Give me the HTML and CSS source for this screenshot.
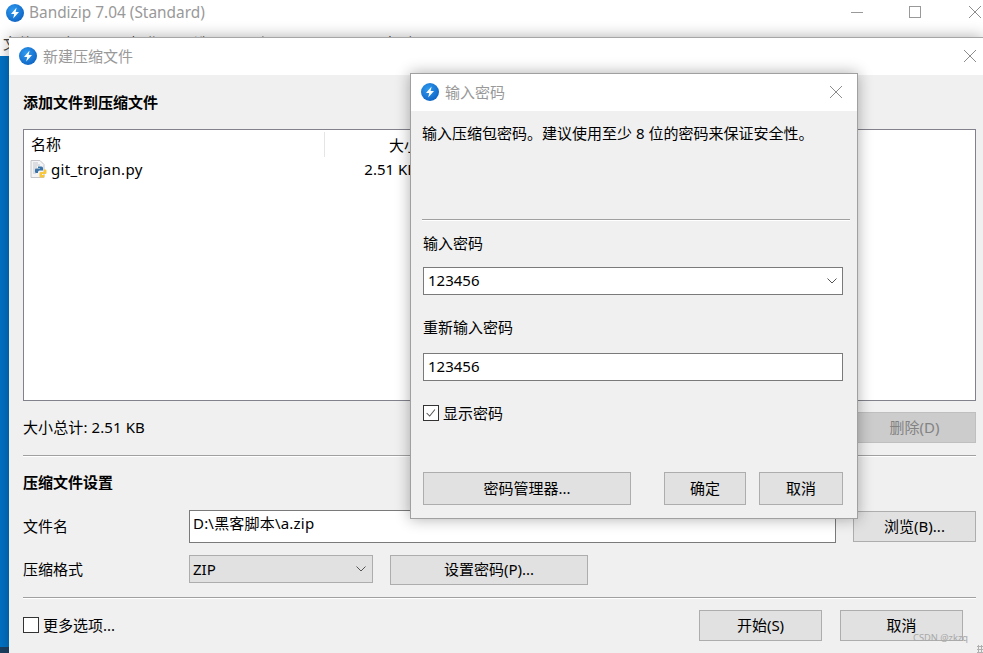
FILE: index.html
```html
<!DOCTYPE html>
<html lang="zh-CN">
<head>
    <meta charset="UTF-8" />
    <title>Bandizip 7.04 (Standard)</title>
    <link rel="stylesheet" href="styles.css">
</head>
<body>
<svg class="defs" width="0" height="0" aria-hidden="true">
    <defs>
        <radialGradient id="logo-fill" cx="40%" cy="35%" r="75%">
            <stop offset="0" stop-color="#2f9bf0"/>
            <stop offset="1" stop-color="#0b5fc0"/>
        </radialGradient>
        <symbol id="logo" viewBox="0 0 18 18">
            <circle cx="9" cy="9" r="9" fill="url(#logo-fill)"/>
            <path d="M10.6 3.6 5 10h3.2l-1 4.6L13 8H9.6z" fill="#fff"/>
        </symbol>
        <symbol id="close" viewBox="0 0 14 14">
            <path d="M1 1l12 12M13 1 1 13" stroke="#8c8c8c" stroke-width="1" fill="none"/>
        </symbol>
        <symbol id="chevron" viewBox="0 0 10 6">
            <path d="M.5.5 5 5 9.5.5" stroke="#555" stroke-width="1" fill="none"/>
        </symbol>
    </defs>
</svg>

<div class="desktop">
    <div class="app-window">
        <div class="app-title">
            <svg class="logo"><use href="#logo"/></svg>
            <span class="app-name">Bandizip 7.04 (Standard)</span>
        </div>
        <div class="win-controls">
            <span class="win-min"></span>
            <span class="win-max"></span>
            <svg class="win-close"><use href="#close"/></svg>
        </div>
        <div class="app-menu">
            <span>文件(F)</span><span>打开(O)</span><span>操作(A)</span><span>选项(O)</span><span>视图(V)</span><span>工具(T)</span><span>帮助(H)</span>
        </div>
        <div class="app-side"></div>
    </div>

    <div class="dialog main-dialog">
        <div class="titlebar">
            <svg class="logo"><use href="#logo"/></svg>
            <span class="titlebar-text">新建压缩文件</span>
            <svg class="close-icon"><use href="#close"/></svg>
        </div>
        <div class="main-body">
            <h2 class="section-title first">添加文件到压缩文件</h2>
            <div class="file-list">
                <div class="list-head">
                    <span class="col-name">名称</span>
                    <span class="col-size">大小</span>
                </div>
                <div class="list-row">
                    <span class="col-name file-name">
                        <svg class="py-icon" viewBox="0 0 18 18">
                            <path d="M1 .5h9l4 4v13H1z" fill="#f4f4f6" stroke="#c4c4c8"/>
                            <path d="M3 3h5M3 5h7M3 7h4M3 9h3M3 11h3M3 13h3" stroke="#c2c6cc" stroke-width="1"/>
                            <path d="M8 6.500h3.500a1.500 1.500 0 0 1 1.500 1.500v2.500h-3.500a1.500 1.500 0 0 0-1.500 1.500v1H6.200a1.200 1.200 0 0 1-1.200-1.200v-2.100a1.200 1.200 0 0 1 1.200-1.200H10V8H8z" fill="#3a74a8"/>
                            <path d="M13.800 9.500h1.500a1.200 1.200 0 0 1 1.200 1.200v2.100a1.200 1.200 0 0 1-1.200 1.200H12v1h2.500v1.200a1.300 1.300 0 0 1-1.300 1.300h-2.400A1.300 1.300 0 0 1 9.500 16.200v-3a1.200 1.200 0 0 1 1.200-1.200h3.100z" fill="#f7c83c"/>
                        </svg>
                        <span class="file-text">git_trojan.py</span>
                    </span>
                    <span class="col-size">2.51 KB</span>
                </div>
            </div>
            <div class="summary-row">
                <span class="summary-text">大小总计: 2.51 KB</span>
                <button class="btn btn-disabled btn-wide" type="button">删除(D)</button>
            </div>
            <div class="rule rule-settings"></div>
            <h2 class="section-title">压缩文件设置</h2>
            <div class="form-row name-row">
                <label class="form-label">文件名</label>
                <div class="path-input">D:\黑客脚本\a.zip</div>
                <button class="btn btn-wide" type="button">浏览(B)...</button>
            </div>
            <div class="form-row format-row">
                <label class="form-label">压缩格式</label>
                <div class="format-select">
                    <span>ZIP</span>
                    <svg class="chevron"><use href="#chevron"/></svg>
                </div>
                <button class="btn btn-password" type="button">设置密码(P)...</button>
            </div>
            <div class="rule rule-foot"></div>
            <div class="foot-row">
                <span class="checkbox"></span>
                <span class="check-label">更多选项...</span>
                <button class="btn btn-wide btn-start" type="button">开始(S)</button>
                <button class="btn btn-wide" type="button">取消</button>
            </div>
        </div>
    </div>

    <div class="dialog password-dialog">
        <div class="titlebar">
            <svg class="logo"><use href="#logo"/></svg>
            <span class="titlebar-text">输入密码</span>
            <svg class="close-icon"><use href="#close"/></svg>
        </div>
        <div class="password-body">
            <p class="hint">输入压缩包密码。建议使用至少 8 位的密码来保证安全性。</p>
            <div class="rule rule-hint"></div>
            <div class="field-label">输入密码</div>
            <div class="text-box">
                <span>123456</span>
                <svg class="chevron"><use href="#chevron"/></svg>
            </div>
            <div class="field-label second">重新输入密码</div>
            <div class="text-box">
                <span>123456</span>
            </div>
            <div class="show-row">
                <span class="checkbox">
                    <svg viewBox="0 0 16 16" class="tick"><path d="M3 8l3.500 3.500L12.500 4" stroke="#555" stroke-width="1.200" fill="none"/></svg>
                </span>
                <span class="check-label">显示密码</span>
            </div>
            <div class="password-buttons">
                <button class="btn btn-manager" type="button">密码管理器...</button>
                <button class="btn btn-ok" type="button">确定</button>
                <button class="btn btn-cancel" type="button">取消</button>
            </div>
        </div>
    </div>

    <div class="watermark">CSDN @zkzq</div>
    <div class="grip"></div>
</div>
</body>
</html>
```
FILE: styles.css
```css
* {
    margin: 0;
    padding: 0;
    box-sizing: border-box;
}
html, body {
    background: white;
    color: #000;
    font-family: "Noto Sans", "Noto Sans CJK SC", sans-serif;
    font-size: 15px;
    line-height: 20px;
    overflow: hidden;
}
.defs {
    position: absolute;
}
.desktop {
    position: relative;
    width: 983px;
    height: 653px;
    overflow: hidden;
}
.logo {
    width: 18px;
    height: 18px;
    flex: none;
}

/* window behind the dialogs */
.app-window {
    position: absolute;
    inset: 0;
    background: white;
}
.app-title {
    display: flex;
    align-items: center;
    gap: 5px;
    height: 26px;
    padding-left: 6px;
}
.app-name {
    color: #999;
    font-size: 15.400px;
    padding-bottom: 1px;
}
.win-controls {
    position: absolute;
    top: 5px;
    left: 851px;
    display: flex;
    align-items: center;
}
.win-min {
    width: 12px;
    height: 1px;
    background: #999;
}
.win-max {
    width: 12px;
    height: 12px;
    border: 1px solid #999;
    margin-left: 46px;
}
.win-close {
    width: 14px;
    height: 14px;
    margin-left: 47px;
}
.app-menu {
    position: absolute;
    top: 33px;
    left: 3px;
    display: flex;
    gap: 15px;
    white-space: nowrap;
    color: #444;
}
.app-side {
    position: absolute;
    top: 56px;
    left: 0;
    width: 9px;
    height: 591px;
    background: #0072c6;
}
.desktop::after {
    content: "";
    position: absolute;
    left: 0;
    bottom: 0;
    width: 9px;
    height: 6px;
    background: #1c3f60;
}

/* dialogs */
.dialog {
    position: absolute;
    display: flex;
    flex-direction: column;
    background: #f0f0f0;
    box-shadow: 0 0 14px rgba(0, 0, 0, 0.32);
    z-index: 1;
}
.main-dialog {
    left: 9px;
    top: 37px;
    width: 974px;
    height: 616px;
    border-top: 1px solid #a6a6a6;
}
.password-dialog {
    left: 410px;
    top: 73px;
    width: 448px;
    height: 446px;
    border: 1px solid #a0a0a0;
    z-index: 2;
}
.titlebar {
    display: flex;
    align-items: center;
    flex: none;
    height: 37px;
    background: white;
    padding: 0 0 2px 10px;
    position: relative;
}
.titlebar-text {
    margin-left: 6px;
    color: #999;
}
.close-icon {
    position: absolute;
    right: 6px;
    top: 11px;
    width: 14px;
    height: 14px;
}
.password-dialog .close-icon {
    right: 14px;
}

/* main dialog body */
.main-body {
    display: flex;
    flex-direction: column;
    padding: 16px 7px 0 14px;
}
.section-title {
    font-size: 15px;
    font-weight: 700;
    line-height: 22px;
}
.file-list {
    display: flex;
    flex-direction: column;
    height: 272px;
    margin-top: 16px;
    background: white;
    border: 1px solid #82828c;
}
.list-head {
    display: flex;
    align-items: center;
    height: 27px;
    margin-top: 1px;
}
.list-row {
    display: flex;
    align-items: center;
    height: 22px;
}
.col-name {
    width: 301px;
    padding-left: 7px;
    flex: none;
}
.list-head .col-name {
    height: 25px;
    line-height: 25px;
    border-right: 1px solid #e5e5e5;
}
.col-size {
    width: 92px;
    text-align: right;
    flex: none;
    white-space: nowrap;
}
.list-head .col-size {
    width: 94px;
}
.file-name {
    display: flex;
    align-items: center;
    gap: 3px;
    padding-left: 6px;
}
.file-text {
    letter-spacing: 0.3px;
}
.py-icon {
    width: 18px;
    height: 18px;
    flex: none;
}
.summary-row {
    display: flex;
    align-items: center;
    justify-content: space-between;
    height: 31px;
    margin-top: 11px;
}
.summary-text {
    padding-bottom: 2px;
    letter-spacing: 0.1px;
}
.rule {
    flex: none;
    height: 2px;
    background: #a0a0a0;
    border-bottom: 1px solid #fff;
}
.rule-settings {
    margin-top: 12px;
    margin-bottom: 14px;
}
.form-row {
    display: flex;
    align-items: center;
}
.name-row {
    height: 33px;
    margin-top: 17px;
}
.format-row {
    height: 30px;
    margin-top: 12px;
    align-items: flex-start;
}
.form-label {
    width: 166px;
    flex: none;
}
.name-row .form-label {
    padding-bottom: 2px;
}
.format-row .form-label {
    line-height: 28px;
}
.path-input {
    width: 647px;
    height: 33px;
    padding: 2px 0 0 3px;
    background: white;
    border: 1px solid #7a7a7a;
    flex: none;
    letter-spacing: 0.2px;
}
.name-row .btn {
    height: 31px;
    margin-left: 17px;
}
.format-select {
    display: flex;
    align-items: center;
    justify-content: space-between;
    width: 184px;
    height: 28px;
    padding: 0 6px 0 3px;
    background: #e1e1e1;
    border: 1px solid #adadad;
    flex: none;
}
.chevron {
    width: 10px;
    height: 6px;
    flex: none;
}
.rule-foot {
    margin-top: 12px;
}
.foot-row {
    display: flex;
    align-items: center;
    height: 31px;
    margin-top: 11px;
    padding-right: 13px;
}
.foot-row .checkbox {
    margin-bottom: 1px;
}
.checkbox {
    display: block;
    flex: none;
    width: 16px;
    height: 16px;
    background: white;
    border: 1px solid #333;
}
.tick {
    display: block;
    width: 14px;
    height: 14px;
}
.check-label {
    margin-left: 4px;
    padding-bottom: 2px;
}
.show-row .check-label {
    padding-bottom: 0;
}

/* buttons */
.btn {
    height: 100%;
    padding-bottom: 2px;
    background: #e1e1e1;
    border: 1px solid #adadad;
    color: #000;
    font: inherit;
    flex: none;
}
.btn-wide {
    width: 123px;
}
.btn-disabled {
    background: #ccc;
    border-color: #bfbfbf;
    color: #838383;
}
.btn-password {
    width: 198px;
    height: 30px;
    margin-left: 17px;
}
.btn-start {
    margin-left: auto;
    margin-right: 18px;
}

/* password dialog body */
.password-body {
    display: flex;
    flex-direction: column;
    padding: 12px 7px 0 11px;
}
.hint {
    line-height: 20px;
    height: 20px;
}
.rule-hint {
    margin-top: 76px;
    background: #a0a0a0;
}
.field-label {
    margin-top: 11px;
    margin-left: 1px;
    line-height: 22px;
}
.field-label.second {
    margin-top: 21px;
}
.text-box {
    display: flex;
    align-items: center;
    justify-content: space-between;
    width: 420px;
    height: 28px;
    margin-left: 1px;
    margin-top: 13px;
    padding: 0 5px 2px 4px;
    background: white;
    border: 1px solid #7a7a7a;
}
.text-box .chevron {
    margin-top: 2px;
}
.field-label.second + .text-box {
    margin-top: 15px;
}
.show-row {
    display: flex;
    align-items: center;
    height: 16px;
    margin: 24px 0 0 1px;
}
.password-buttons {
    display: flex;
    height: 33px;
    margin: 51px 0 0 1px;
}
.btn-manager {
    width: 208px;
}
.btn-ok {
    width: 82px;
    margin-left: 33px;
}
.btn-cancel {
    width: 84px;
    margin-left: 13px;
}

/* overlays */
.watermark {
    position: absolute;
    left: 913px;
    top: 631px;
    color: #a8a8a8;
    font-size: 9.300px;
    line-height: 14px;
    white-space: nowrap;
    z-index: 3;
}
.grip {
    position: absolute;
    right: 0;
    bottom: 0;
    width: 6px;
    height: 8px;
    background: radial-gradient(circle, #b0b0b0 1px, transparent 1.200px) 0 0 / 3px 3px;
    z-index: 3;
}
```
